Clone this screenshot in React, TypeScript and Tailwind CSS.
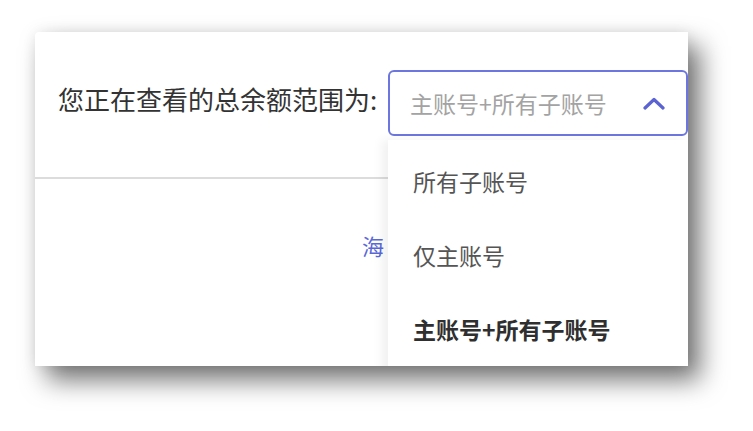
const options = [
  { label: "所有子账号", active: false },
  { label: "仅主账号", active: false },
  { label: "主账号+所有子账号", active: true },
];

function ChevronUp() {
  return (
    <svg width="24" height="14" viewBox="0 0 24 14" fill="none">
      <path
        d="M3 12L12 3.5L21 12"
        stroke="#5b63d3"
        strokeWidth="3.2"
        strokeLinecap="round"
        strokeLinejoin="round"
      />
    </svg>
  );
}

export default function App() {
  return (
    <div
      className="h-[431px] w-[753px] overflow-hidden bg-white pl-[35px] pt-[32px]"
      style={{ fontFamily: '"Noto Sans CJK SC", "Noto Sans", sans-serif' }}
    >
      <div className="relative h-[334px] w-[653px] overflow-hidden rounded-tl-[4px] bg-white shadow-[12px_14px_26px_rgba(0,0,0,0.55),0_0_14px_rgba(0,0,0,0.08)]">
        <div className="flex h-[145px] items-start pl-[23px] pt-[38px]">
          <span className="mt-[12px] w-[330px] shrink-0 whitespace-nowrap text-[26px] leading-[34px] text-[#333333]">
            您正在查看的总余额范围为:
          </span>
          <div className="flex h-[66px] w-[300px] items-center justify-between rounded-[6px] border-2 border-[#6d76de] pl-[20px] pr-[20px]">
            <span className="text-[23px] text-[#a3a3a3]">主账号+所有子账号</span>
            <ChevronUp />
          </div>
        </div>
        <div className="h-[2px] w-full bg-[#dcdcdc]" />
        <div className="pl-[327px] pt-[50px]">
          <span className="text-[22px] text-[#5a68d8]">海</span>
        </div>

        <div className="absolute left-[353px] top-[108px] h-[240px] w-[300px] bg-white pt-[4px] shadow-[-6px_0_10px_rgba(0,0,0,0.06)]">
          {options.map((o) => (
            <div
              key={o.label}
              className={`flex h-[74px] items-center pl-[25px] text-[23px] ${
                o.active ? "font-semibold text-[#2f2f2f]" : "text-[#555555]"
              }`}
            >
              {o.label}
            </div>
          ))}
        </div>
      </div>
    </div>
  );
}
